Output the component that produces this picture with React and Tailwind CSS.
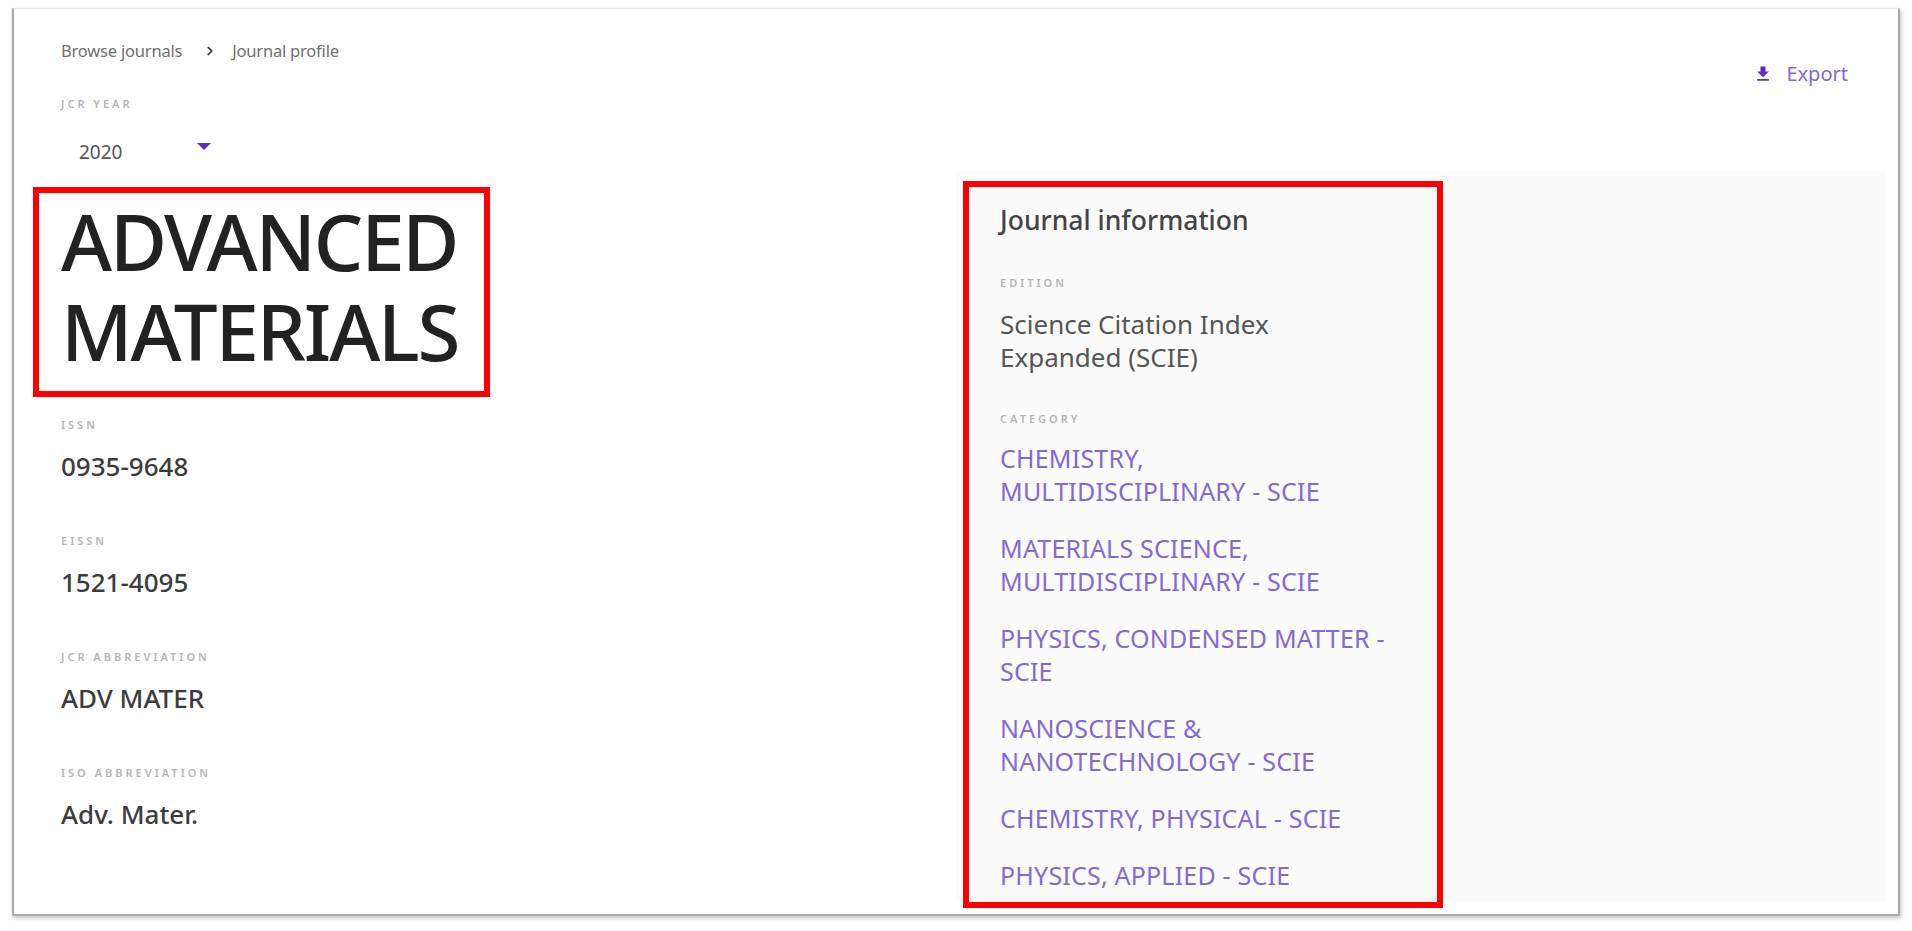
import React from 'react';
import { ChevronRight } from 'lucide-react';

const categories = [
  ['CHEMISTRY,', 'MULTIDISCIPLINARY - SCIE'],
  ['MATERIALS SCIENCE,', 'MULTIDISCIPLINARY - SCIE'],
  ['PHYSICS, CONDENSED MATTER -', 'SCIE'],
  ['NANOSCIENCE &', 'NANOTECHNOLOGY - SCIE'],
  ['CHEMISTRY, PHYSICAL - SCIE'],
  ['PHYSICS, APPLIED - SCIE'],
];

const fields = [
  ['ISSN', '0935-9648'],
  ['EISSN', '1521-4095'],
  ['JCR ABBREVIATION', 'ADV MATER'],
  ['ISO ABBREVIATION', 'Adv. Mater.'],
];

const Label = ({ children, className = '' }) => (
  <div className={`text-[11px] leading-[14px] font-semibold tracking-[3px] text-[#b5b5b5] ${className}`}>{children}</div>
);

const App = () => {
  return (
    <div className="w-[1912px] h-[931px] overflow-hidden bg-white pt-2 pl-3 font-['Noto_Sans',sans-serif]">
      <div className="w-[1888px] h-[908px] border-2 border-t border-[#a9a9a9] border-t-[#e6e6e6] shadow-[1px_2px_4px_rgba(0,0,0,0.25)] bg-white">
        <div className="flex justify-between h-[162px] pl-[47px] pr-[50px]">
          <div>
            <div className="flex items-center mt-[32px] h-5 text-[16.5px] tracking-[-0.2px] text-[#6f6f6f]">
              <span>Browse journals</span>
              <ChevronRight className="ml-[21px] mr-[15px] w-[14px] h-[14px] text-[#333]" strokeWidth={3} />
              <span>Journal profile</span>
            </div>
            <Label className="mt-[36px]">JCR YEAR</Label>
            <div className="flex items-start mt-[29px] ml-[18px] text-[19px] leading-6 text-[#555]">
              <span>2020</span>
              <svg className="mt-[3px] ml-[75px] w-[14px] h-[7px]" viewBox="0 0 14 7"><path d="M0 0h14L7 7z" fill="#5b2fc4" /></svg>
            </div>
          </div>
          <div className="flex items-center gap-[13px] h-6 mt-[53px] text-[#8468d4] text-[20px]">
            <svg className="w-5 h-5" viewBox="0 0 24 24"><path d="M19 9h-4V3H9v6H5l7 7 7-7zM5 18v2h14v-2H5z" fill="#5b2fc4" /></svg>
            <span>Export</span>
          </div>
        </div>
        <div className="flex">
          <div className="w-[942px] pt-4 pl-[19px]">
            <div className="w-[457px] h-[210px] border-[6px] border-[#ff0000] pl-[22px] pt-[3px]">
              <h1 className="text-[78px] leading-[90px] tracking-[-2.2px] font-medium text-[#222]">
                ADVANCED
                <br />
                MATERIALS
              </h1>
            </div>
            <div className="pl-7 mt-[21px] flex flex-col gap-[54px]">
              {fields.map(([label, value]) => (
                <div key={label}>
                  <Label>{label}</Label>
                  <div className="mt-5 text-[26px] leading-[28px] font-medium text-[#3c3c3c]">{value}</div>
                </div>
              ))}
            </div>
          </div>
          <div className="w-[930px] h-[731px] bg-[#fbfbfb] pl-[7px] pt-[10px]">
            <div className="w-[480px] h-[727px] border-[6px] border-[#ff0000] pl-[31px] pt-[17px]">
              <h2 className="text-[26.5px] leading-[32px] font-medium text-[#444]">Journal information</h2>
              <Label className="mt-[40px]">EDITION</Label>
              <div className="mt-[18px] text-[26px] leading-[33px] text-[#555]">
                Science Citation Index
                <br />
                Expanded (SCIE)
              </div>
              <Label className="mt-[38px]">CATEGORY</Label>
              <div className="mt-[16px] flex flex-col gap-[24px] text-[25px] tracking-[0.2px] leading-[33px] text-[#8468d4]">
                {categories.map((lines) => (
                  <a key={lines.join()} className="block">
                    {lines.map((line) => (
                      <div key={line}>{line}</div>
                    ))}
                  </a>
                ))}
              </div>
            </div>
          </div>
        </div>
      </div>
    </div>
  );
};

export default App;
